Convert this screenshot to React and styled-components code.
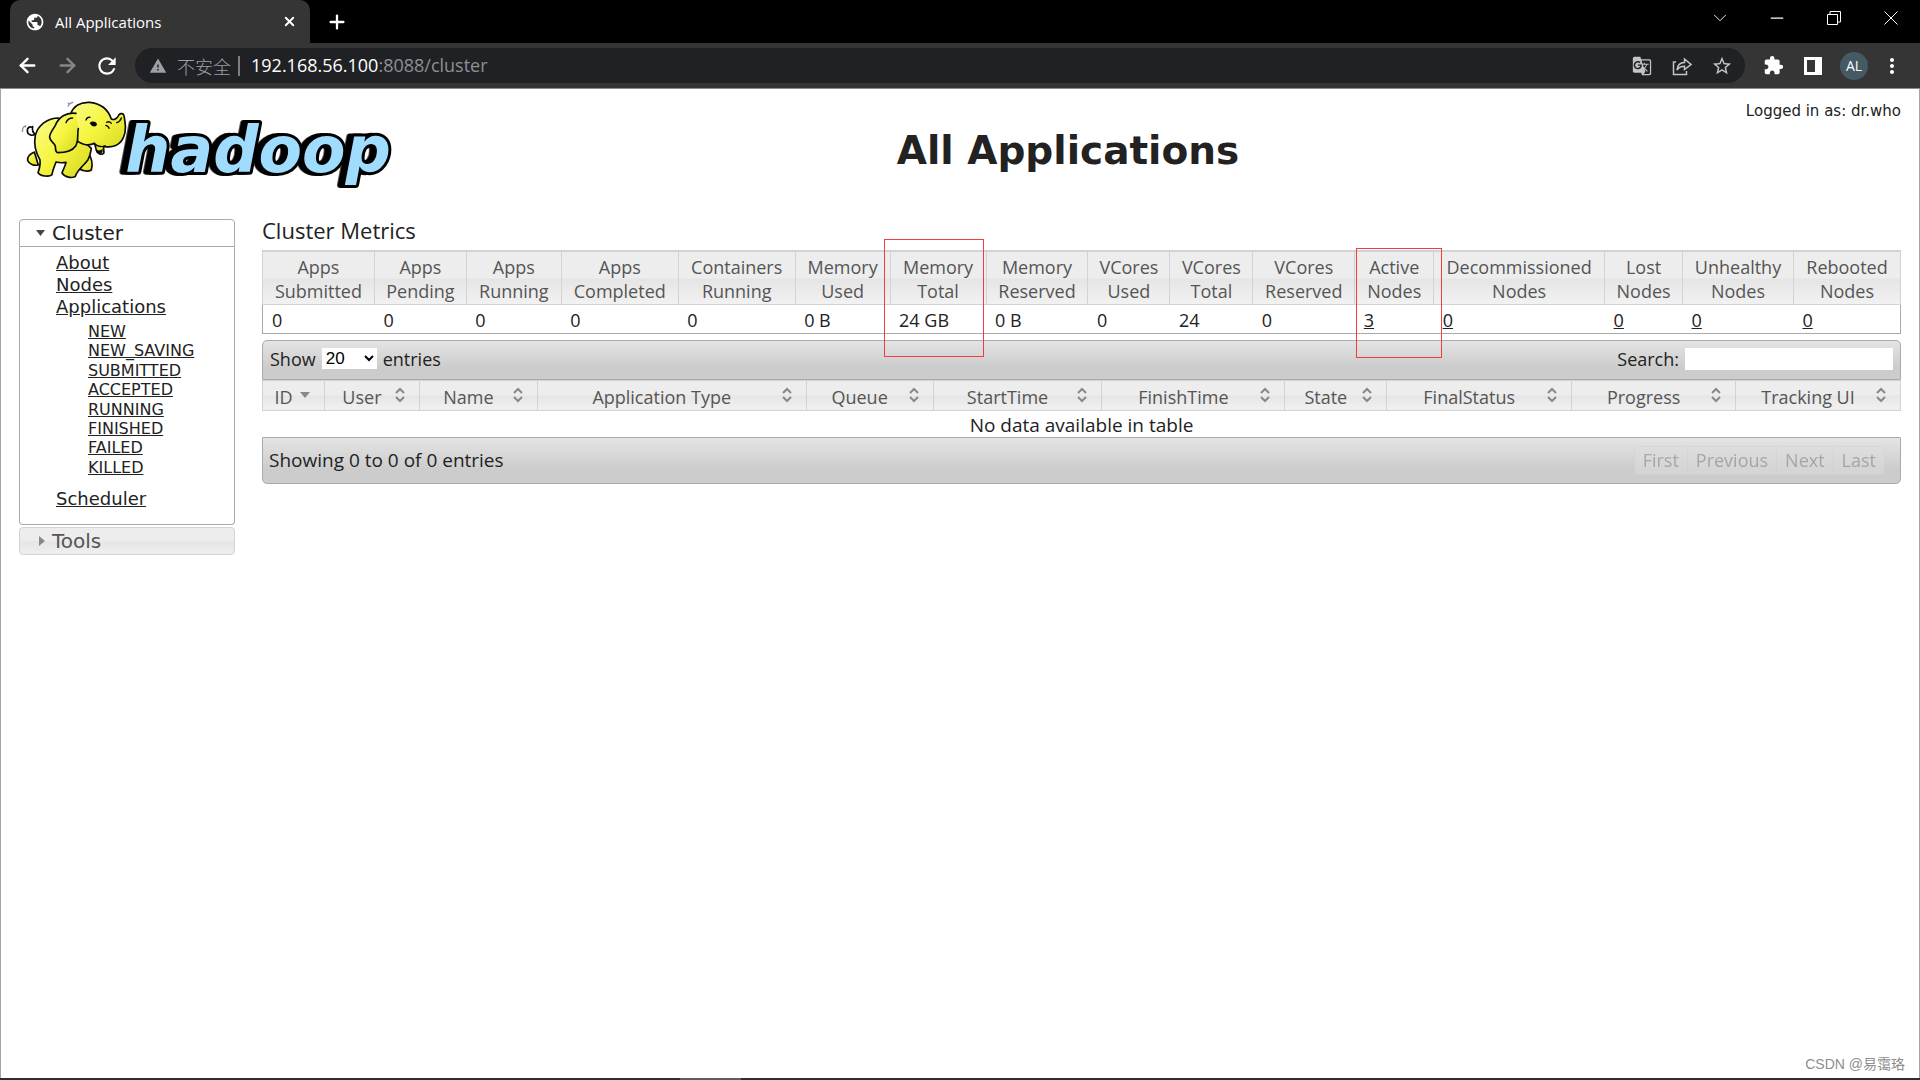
import React, { useState } from "react"
import styled, { createGlobalStyle } from "styled-components"
import {
  ArrowLeft,
  ArrowRight,
  Plus,
  X,
  ChevronDown,
  Minus,
} from "lucide-react"
import {
  MdExtension,
  MdGTranslate,
  MdMoreVert,
  MdPublic,
  MdRefresh,
  MdStarBorder,
  MdWarning,
} from "react-icons/md"

const sans = `"Open Sans", "Noto Sans CJK SC", sans-serif`
const verdana = `"DejaVu Sans", sans-serif`

const GlobalStyle = createGlobalStyle`
  * {
    box-sizing: border-box;
  }
  body {
    margin: 0;
    background: #ffffff;
    color: #222222;
    font-family: ${sans};
    font-size: 18px;
  }
  a {
    color: #222222;
  }
`

const Window = styled.div`
  position: relative;
  display: flex;
  flex-direction: column;
  min-height: 100vh;
`

/* browser chrome */

const TabStrip = styled.div`
  display: flex;
  align-items: center;
  height: 43px;
  padding-left: 10px;
  background: #000000;
  color: #ffffff;
`

const Tab = styled.div`
  display: flex;
  align-items: center;
  align-self: stretch;
  width: 300px;
  padding: 0 12px 0 15px;
  gap: 10px;
  border-radius: 10px 10px 0 0;
  background: #353535;
  font-size: 15px;
`

const TabTitle = styled.span`
  flex: 1;
`

const IconButton = styled.button`
  display: flex;
  align-items: center;
  justify-content: center;
  width: ${({ $width }) => $width || 40}px;
  height: 28px;
  padding: 0;
  border: 0;
  background: none;
  color: ${({ $color }) => $color || "#ffffff"};
`

const WindowControls = styled.div`
  display: flex;
  align-items: center;
  height: 36px;
  margin-left: auto;
  align-self: flex-start;
`

const Toolbar = styled.div`
  display: flex;
  align-items: center;
  height: 46px;
  padding: 0 11px 0 7px;
  border-bottom: 1px solid #8a8a8a;
  background: #353535;
`

const AddressBar = styled.div`
  display: flex;
  flex: 1;
  align-items: center;
  height: 35px;
  margin: 0 8px;
  padding-left: 14px;
  padding-right: 3px;
  border-radius: 18px;
  background: #202124;
  color: #9aa0a6;
  font-size: 18px;
`

const Security = styled.span`
  margin-left: 10px;
  padding-right: 7px;
  border-right: 2px solid #7c7f83;
  font-family: "Noto Sans CJK SC", sans-serif;
  font-size: 18px;
  font-weight: 300;
  line-height: 20px;
`

const Address = styled.span`
  flex: 1;
  margin-left: 11px;
  padding-bottom: 2px;
  color: #8d9094;
`

const Host = styled.span`
  color: #ffffff;
`

const Avatar = styled.button`
  width: 28px;
  height: 28px;
  margin: 0 7px;
  padding: 0;
  border: 0;
  border-radius: 50%;
  background: #455a64;
  color: #ffffff;
  font-family: ${sans};
  font-size: 14px;
`

/* page */

const Page = styled.div`
  flex: 1;
  padding: 0 18px;
  border: 1px solid #a5a5a5;
  border-top: 0;
  border-bottom: 0;
`

const Header = styled.header`
  display: grid;
  grid-template-columns: 216px 1fr;
  height: 130px;
`

const Logo = styled.svg`
  width: 400px;
  height: 110px;
  margin: 1px 0 0 -9px;
`

const Wordmark = styled.text`
  font: italic 700 190px "DejaVu Sans", sans-serif;
  fill: #a0dcfe;
  stroke: #000000;
  stroke-width: 18px;
  stroke-linejoin: round;
  paint-order: stroke;
  filter: drop-shadow(-14px 0 0 #000000);
`

const HeaderText = styled.div`
  display: flex;
  flex-direction: column;
  padding-top: 12px;
`

const User = styled.div`
  font-family: ${verdana};
  font-size: 15px;
  line-height: 20px;
  text-align: right;
`

const Title = styled.h1`
  margin: 6px 0 0;
  font-family: ${verdana};
  font-size: 39px;
  line-height: 48px;
  text-align: center;
`

const Body = styled.div`
  display: grid;
  grid-template-columns: 216px 1fr;
  gap: 27px;
  align-items: start;
`

const Nav = styled.nav`
  font-family: ${verdana};
`

const NavHeader = styled.button`
  display: flex;
  align-items: center;
  gap: 7px;
  width: 100%;
  height: 28px;
  padding: 0 0 0 16px;
  border: 1px solid ${({ $open }) => ($open ? "#aaaaaa" : "#d3d3d3")};
  border-radius: ${({ $open }) => ($open ? "4px 4px 0 0" : "4px")};
  background: ${({ $open }) =>
    $open
      ? "#ffffff"
      : "linear-gradient(#ededed 0, #ededed 45%, #e6e6e6 55%, #efefef 100%)"};
  color: ${({ $open }) => ($open ? "#212121" : "#555555")};
  font-family: ${verdana};
  font-size: 20px;
  text-align: left;
`

const NavPanel = styled.div`
  margin-bottom: 2px;
  padding: 5px 0 14px 36px;
  border: 1px solid #aaaaaa;
  border-top: 0;
  border-radius: 0 0 4px 4px;
  font-size: 18px;
  line-height: 22px;
`

const NavList = styled.ul`
  margin: 0;
  padding: 0;
  list-style: none;
`

const StateList = styled(NavList)`
  display: grid;
  grid-auto-rows: 1fr;
  height: 155px;
  margin: 4px 0 11px 32px;
  font-size: 16px;
  line-height: 19px;
`

const SectionTitle = styled.div`
  height: 31px;
  font-size: 22px;
  line-height: 22px;
`

const DataTable = styled.table`
  width: 100%;
  table-layout: fixed;
  border-collapse: collapse;
`

const Col = styled.col`
  width: ${({ $share }) => ($share / 1639) * 100}%;
`

const HeadCell = styled.th`
  position: relative;
  padding: 0;
  border: 1px solid #d3d3d3;
  background: linear-gradient(#ededed 0, #ededed 50%, #e5e5e5 52%, #f1f1f1 100%);
  color: #555555;
  font-weight: 400;
`

const MetricHead = styled(HeadCell)`
  height: 53px;
  padding-top: 3px;
  border-top-width: 2px;
  line-height: 24px;
  white-space: nowrap;
`

const MetricsBody = styled.tbody`
  border: 1px solid #aaaaaa;
  border-top: 0;
`

const MetricCell = styled.td`
  height: 29px;
  padding: 3px 0 0 9px;
  line-height: 24px;
`

const Highlight = styled.span`
  position: absolute;
  z-index: 1;
  top: ${({ $top }) => $top}px;
  left: ${({ $left }) => $left}px;
  width: ${({ $width }) => $width}px;
  height: ${({ $height }) => $height}px;
  border: 1px solid #f83a3a;
  pointer-events: none;
`

const Bar = styled.div`
  display: flex;
  align-items: center;
  justify-content: space-between;
  border: 1px solid #aaaaaa;
  background: linear-gradient(#e4e4e4 0, #cccccc 70%, #cccccc 100%);
`

const TopBar = styled(Bar)`
  height: 40px;
  margin-top: 6px;
  padding: 0 7px 2px 7px;
  border-radius: 5px 5px 0 0;
`

const BottomBar = styled(Bar)`
  height: 47px;
  padding: 0 15px 0 6px;
  border-radius: 0 0 5px 5px;
  font-size: 19px;
`

const Field = styled.label`
  display: flex;
  align-items: center;
  gap: 6px;
`

const LengthSelect = styled.select`
  width: 55px;
  height: 21px;
  padding: 0;
  border: 0;
  background: #ffffff;
  color: #000000;
  font-family: "Liberation Sans", sans-serif;
  font-size: 17px;
`

const SearchInput = styled.input`
  width: 208px;
  height: 22px;
  border: 0;
  background: #ffffff;
`

const SortButton = styled.button`
  display: flex;
  align-items: center;
  width: 100%;
  height: 29px;
  padding: 3px 11px 0 7px;
  border: 0;
  background: none;
  color: inherit;
  font-family: ${sans};
  font-size: 18px;
  line-height: 24px;
  white-space: nowrap;
`

const SortLabel = styled.span`
  flex: 1;
`

const SortMark = styled.svg`
  flex: none;
  width: 16px;
  height: 20px;
  margin-bottom: 4px;
`

const EmptyCell = styled.td`
  height: 26px;
  padding: 3px 0 0;
  font-size: 19px;
  line-height: 23px;
  text-align: center;
`

const Pager = styled.div`
  display: flex;
  opacity: 0.5;
`

const PageButton = styled.button`
  height: 29px;
  padding: 0 8px;
  border: 1px solid #d3d3d3;
  border-left-width: ${({ $first }) => ($first ? 1 : 0)}px;
  border-radius: ${({ $first, $last }) =>
    $first ? "5px 0 0 5px" : $last ? "0 5px 5px 0" : "0"};
  background: #dedede;
  color: #7a7a7a;
  font-family: ${sans};
  font-size: 18px;
`

const Watermark = styled.div`
  position: absolute;
  right: 15px;
  bottom: 5px;
  color: #8e8e8e;
  font-family: "Liberation Sans", "Noto Sans CJK SC", sans-serif;
  font-size: 14px;
  line-height: 22px;
`

const Taskbar = styled.div`
  height: 2px;
  background: linear-gradient(
    90deg,
    #302d2f 680px,
    #5f5d5e 680px,
    #5f5d5e 741px,
    #302d2f 741px
  );
`

const appStates = [
  "NEW",
  "NEW_SAVING",
  "SUBMITTED",
  "ACCEPTED",
  "RUNNING",
  "FINISHED",
  "FAILED",
  "KILLED",
]

const metrics = [
  { head: ["Apps", "Submitted"], value: "0", share: 112 },
  { head: ["Apps", "Pending"], value: "0", share: 92 },
  { head: ["Apps", "Running"], value: "0", share: 95 },
  { head: ["Apps", "Completed"], value: "0", share: 117 },
  { head: ["Containers", "Running"], value: "0", share: 117 },
  { head: ["Memory", "Used"], value: "0 B", share: 95 },
  {
    head: ["Memory", "Total"],
    value: "24 GB",
    share: 96,
    mark: { top: -13, left: -7, width: 100, height: 118 },
  },
  { head: ["Memory", "Reserved"], value: "0 B", share: 102 },
  { head: ["VCores", "Used"], value: "0", share: 82 },
  { head: ["VCores", "Total"], value: "24", share: 83 },
  { head: ["VCores", "Reserved"], value: "0", share: 102 },
  {
    head: ["Active", "Nodes"],
    value: "3",
    share: 79,
    link: true,
    mark: { top: -4, left: 1, width: 86, height: 110 },
  },
  { head: ["Decommissioned", "Nodes"], value: "0", share: 171, link: true },
  { head: ["Lost", "Nodes"], value: "0", share: 78, link: true },
  { head: ["Unhealthy", "Nodes"], value: "0", share: 111, link: true },
  { head: ["Rebooted", "Nodes"], value: "0", share: 107, link: true },
]

const columns = [
  { name: "ID", share: 62, sorted: true },
  { name: "User", share: 95 },
  { name: "Name", share: 118 },
  { name: "Application Type", share: 269 },
  { name: "Queue", share: 127 },
  { name: "StartTime", share: 169 },
  { name: "FinishTime", share: 183 },
  { name: "State", share: 102 },
  { name: "FinalStatus", share: 185 },
  { name: "Progress", share: 164 },
  { name: "Tracking UI", share: 165 },
]

function Browser() {
  return (
    <>
      <TabStrip>
        <Tab>
          <MdPublic size={20} />
          <TabTitle>All Applications</TabTitle>
          <IconButton $width={18} aria-label="Close tab">
            <X size={15} strokeWidth={3} />
          </IconButton>
        </Tab>
        <IconButton $width={54} aria-label="New tab">
          <Plus size={22} strokeWidth={2.5} />
        </IconButton>
        <WindowControls>
          <IconButton $width={57} aria-label="Search tabs">
            <ChevronDown size={22} strokeWidth={1} />
          </IconButton>
          <IconButton $width={57} aria-label="Minimize">
            <Minus size={20} strokeWidth={1.5} />
          </IconButton>
          <IconButton $width={57} aria-label="Restore">
            <svg width="14" height="14" fill="none" stroke="currentColor">
              <path d="M.5 3.5h10v10H.5zM3 3V.5h10.5V11H11" />
            </svg>
          </IconButton>
          <IconButton $width={58} aria-label="Close">
            <svg width="14" height="14" stroke="currentColor">
              <path d="M.5.5l13 13M13.5.5l-13 13" />
            </svg>
          </IconButton>
        </WindowControls>
      </TabStrip>
      <Toolbar>
        <IconButton aria-label="Back">
          <ArrowLeft size={23} strokeWidth={2.5} />
        </IconButton>
        <IconButton $color="#868686" aria-label="Forward">
          <ArrowRight size={23} strokeWidth={2.5} />
        </IconButton>
        <IconButton aria-label="Reload">
          <MdRefresh size={26} />
        </IconButton>
        <AddressBar>
          <MdWarning size={18} />
          <Security>不安全</Security>
          <Address>
            <Host>192.168.56.100</Host>:8088/cluster
          </Address>
          <IconButton $color="#c3c4c5" aria-label="Translate">
            <MdGTranslate size={20} />
          </IconButton>
          <IconButton $color="#c3c4c5" aria-label="Share">
            <svg
              width="20"
              height="20"
              fill="none"
              stroke="currentColor"
              strokeWidth="1.5"
            >
              <path d="M4 6H1.5v12.5h13V15" />
              <path d="M5 14c.5-5 3-7.500 7.500-7.500V3l6.500 5.500-6.500 5v-3.200C9 10.300 7 11 5 14z" />
            </svg>
          </IconButton>
          <IconButton $color="#c3c4c5" aria-label="Bookmark">
            <MdStarBorder size={22} />
          </IconButton>
        </AddressBar>
        <IconButton aria-label="Extensions">
          <MdExtension size={21} />
        </IconButton>
        <IconButton aria-label="Side panel">
          <svg width="18" height="18">
            <path
              fill="currentColor"
              fillRule="evenodd"
              d="M0 0h18v18H0zM3 3v12h8V3z"
            />
          </svg>
        </IconButton>
        <Avatar>AL</Avatar>
        <IconButton $width={34} aria-label="Menu">
          <MdMoreVert size={24} />
        </IconButton>
      </Toolbar>
    </>
  )
}

function HadoopLogo() {
  return (
    <Logo viewBox="0 0 1200 330" role="img" aria-label="hadoop">
      <defs>
        <linearGradient id="hide" x1="0" y1="0" x2="1" y2="1">
          <stop offset="0" stopColor="#fbfb8c" />
          <stop offset="0.5" stopColor="#f5f53f" />
          <stop offset="1" stopColor="#d3d51d" />
        </linearGradient>
      </defs>
      <Wordmark x="346" y="247">
        hadoop
      </Wordmark>
      <g
        fill="url(#hide)"
        stroke="#0b0b08"
        strokeWidth="5"
        strokeLinecap="round"
        strokeLinejoin="round"
      >
        <path d="M73 186c-14 6-22 16-20 26 5 10 18 16 32 13z" />
        <path d="M236 192c10 14 12 32 8 48-8 5-24 4-34-2z" />
        <path
          d="M76 132c-10 8-24 2-24-10 0-8 6-14 14-10M76 132c-8-4-10-12-8-22"
          fill="none"
        />
        <path d="M146 84c-34 0-62 22-70 52-5 26-1 48 14 74 2 16-2 26-6 38 8 11 34 14 42 6 2-14 8-26 12-38 12 3 20 3 30 1-2 11-8 20-12 32 8 13 30 17 40 10 6-20 26-32 38-50 8-14 8-24 10-34z" />
        <path d="M182 72c8-24 30-36 56-35 34 3 56 20 66 50 9 4 18-2 23-13 4-5 14-4 15 3 4 24 8 44-2 66-10 22-32 32-58 26-4 8 2 13-1 21-8 6-20 0-22-10-2-7-3-14-6-20-20 10-46 2-56-14-18-26-26-50-15-74z" />
        <path d="M198 70c-30-4-52 12-62 36-8 14-18 25-17 36 1 12 12 15 16 24 4 9-2 18 8 22 22 0 44-5 54-20 10-16 4-34 8-52" />
        <path
          d="M188 84c-8 0-16 4-20 14M228 90c2-6 6-9 12-8M290 97c6-4 10-2 14 3M252 160c10 10 22 12 34 8M320 98c8-2 12-8 14-14"
          fill="none"
          strokeWidth="4"
        />
      </g>
      <path
        d="M239 99c8-7 20-5 22 4-2 9-15 10-22-4zM257 178c8 5 16 4 20-2 3 10-2 15-10 15-7-1-10-7-10-13z"
        fill="#0b0b08"
      />
      <path
        d="M286 106c6 0 10 4 12 10"
        fill="none"
        stroke="#0b0b08"
        strokeWidth="4"
      />
      <path
        d="M174 50c2-7 7-12 16-13M178 43l-4-5M38 126c-2-8 1-14 6-18M45 112l3-6"
        fill="none"
        stroke="#8e8e8e"
        strokeWidth="4"
      />
    </Logo>
  )
}

function SortIcon({ sorted }) {
  return (
    <SortMark viewBox="0 0 16 20" aria-hidden="true">
      {sorted ? (
        <path d="M3 7h10l-5 6z" fill="#888888" />
      ) : (
        <path
          d="M4 8l4-4 4 4M4 12l4 4 4-4"
          fill="none"
          stroke="#888888"
          strokeWidth="2"
        />
      )}
    </SortMark>
  )
}

function SideNav() {
  return (
    <Nav>
      <NavHeader $open>
        <svg width="9" height="6">
          <path d="M0 0h9L4.500 6z" fill="#454545" />
        </svg>
        Cluster
      </NavHeader>
      <NavPanel>
        <NavList>
          <li>
            <a href="#about">About</a>
          </li>
          <li>
            <a href="#nodes">Nodes</a>
          </li>
          <li>
            <a href="#apps">Applications</a>
            <StateList>
              {appStates.map((state) => (
                <li key={state}>
                  <a href={`#apps/${state}`}>{state}</a>
                </li>
              ))}
            </StateList>
          </li>
          <li>
            <a href="#scheduler">Scheduler</a>
          </li>
        </NavList>
      </NavPanel>
      <NavHeader>
        <svg width="9" height="10">
          <path d="M3 0l6 5-6 5z" fill="#888888" />
        </svg>
        Tools
      </NavHeader>
    </Nav>
  )
}

function Metrics() {
  return (
    <DataTable>
      <colgroup>
        {metrics.map((m) => (
          <Col key={m.head.join()} $share={m.share} />
        ))}
      </colgroup>
      <thead>
        <tr>
          {metrics.map(({ head, mark }) => (
            <MetricHead key={head.join()}>
              {head[0]}
              <br />
              {head[1]}
              {mark && (
                <Highlight
                  $top={mark.top}
                  $left={mark.left}
                  $width={mark.width}
                  $height={mark.height}
                />
              )}
            </MetricHead>
          ))}
        </tr>
      </thead>
      <MetricsBody>
        <tr>
          {metrics.map((m) => (
            <MetricCell key={m.head.join()}>
              {m.link ? <a href="#nodes">{m.value}</a> : m.value}
            </MetricCell>
          ))}
        </tr>
      </MetricsBody>
    </DataTable>
  )
}

function Applications() {
  const [length, setLength] = useState("20")
  const [search, setSearch] = useState("")

  return (
    <>
      <TopBar>
        <Field>
          Show
          <LengthSelect
            value={length}
            onChange={(e) => setLength(e.target.value)}
          >
            <option>20</option>
            <option>50</option>
            <option>100</option>
          </LengthSelect>
          entries
        </Field>
        <Field>
          Search:
          <SearchInput
            type="text"
            value={search}
            onChange={(e) => setSearch(e.target.value)}
          />
        </Field>
      </TopBar>
      <DataTable>
        <colgroup>
          {columns.map((c) => (
            <Col key={c.name} $share={c.share} />
          ))}
        </colgroup>
        <thead>
          <tr>
            {columns.map((c) => (
              <HeadCell key={c.name}>
                <SortButton>
                  <SortLabel>{c.name}</SortLabel>
                  <SortIcon sorted={c.sorted} />
                </SortButton>
              </HeadCell>
            ))}
          </tr>
        </thead>
        <tbody>
          <tr>
            <EmptyCell colSpan={columns.length}>
              No data available in table
            </EmptyCell>
          </tr>
        </tbody>
      </DataTable>
      <BottomBar>
        <span>Showing 0 to 0 of 0 entries</span>
        <Pager>
          <PageButton $first>First</PageButton>
          <PageButton>Previous</PageButton>
          <PageButton>Next</PageButton>
          <PageButton $last>Last</PageButton>
        </Pager>
      </BottomBar>
    </>
  )
}

export default function App() {
  return (
    <Window>
      <GlobalStyle />
      <Browser />
      <Page>
        <Header>
          <HadoopLogo />
          <HeaderText>
            <User>Logged in as: dr.who</User>
            <Title>All Applications</Title>
          </HeaderText>
        </Header>
        <Body>
          <SideNav />
          <main>
            <SectionTitle>Cluster Metrics</SectionTitle>
            <Metrics />
            <Applications />
          </main>
        </Body>
      </Page>
      <Watermark>CSDN @易霭珞</Watermark>
      <Taskbar />
    </Window>
  )
}
